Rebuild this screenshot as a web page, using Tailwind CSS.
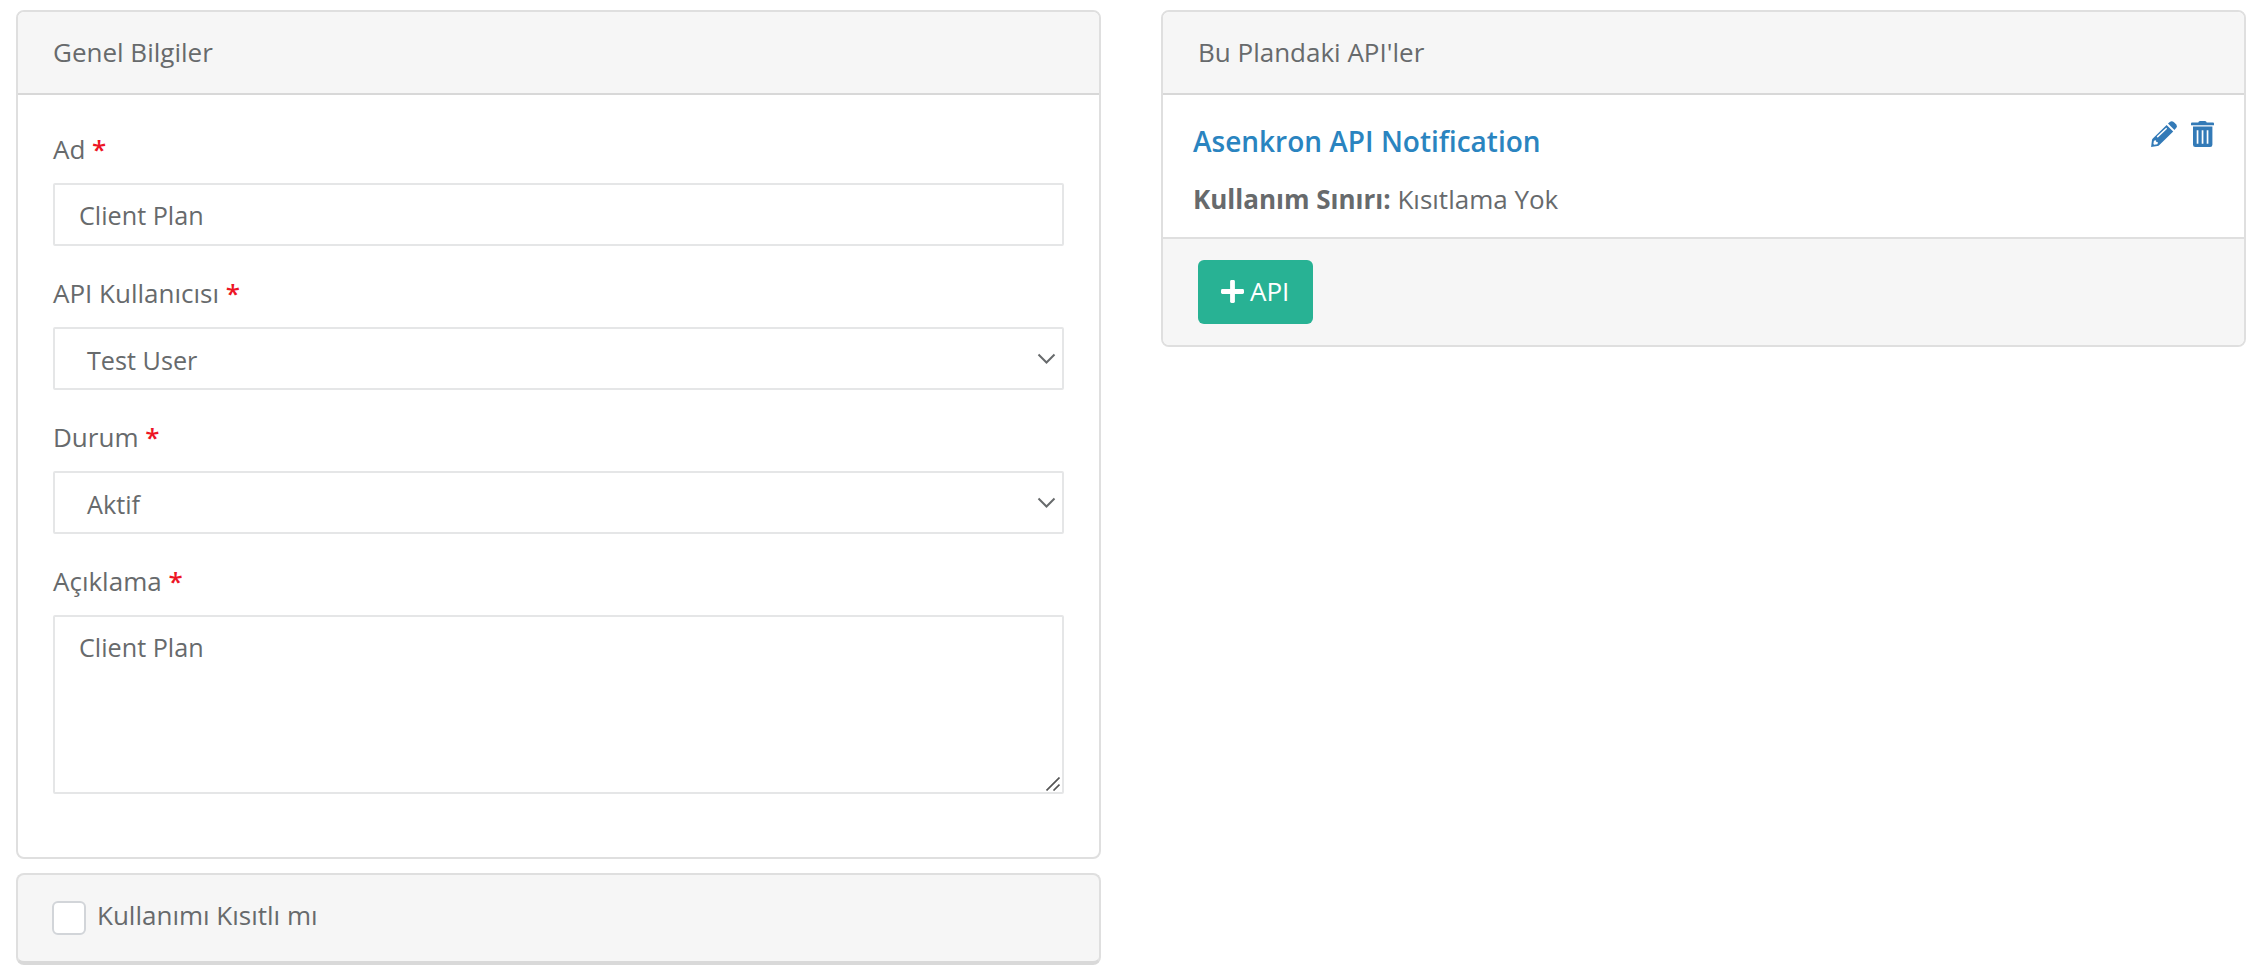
<!DOCTYPE html>
<html lang="tr">
<head>
<meta charset="utf-8">
<title>Plan</title>
<script src="https://cdn.jsdelivr.net/npm/@tailwindcss/browser@4"></script>
</head>
<body class="bg-white font-['Open_Sans',sans-serif] text-[26px] leading-9 text-[#676a6c]">
<main class="flex items-start gap-[60px] pt-2.5 pl-4">
  <div class="flex w-[1085px] flex-col gap-3.5">
    <section class="h-[849px] overflow-hidden rounded-lg border-2 border-[#dfdfdf] bg-white">
      <header class="h-[83px] border-b-2 border-[#d8d8d8] bg-[#f6f6f6] px-[35px] pt-[22px]">Genel Bilgiler</header>
      <form class="flex flex-col px-[35px] pt-9">
        <div class="h-36">
          <label class="block">Ad <b class="font-semibold text-[#ed1525]">*</b></label>
          <div class="mt-4 h-[63px] rounded-xs border-2 border-[#e5e6e7] px-6 pt-3 text-[25.2px]">Client Plan</div>
        </div>
        <div class="h-36">
          <label class="block">API Kullanıcısı <b class="font-semibold text-[#ed1525]">*</b></label>
          <div class="mt-4 flex h-[63px] justify-between rounded-xs border-2 border-[#e5e6e7] pt-[13px] pr-1.5 pl-8 text-[25.2px]">
            <span>Test User</span>
            <svg class="mt-[11px] h-3 w-[19px]" viewBox="0 0 19 12" fill="none" stroke="#676a6c" stroke-width="2"><path d="M1.5 1.5 9.5 9.5 17.5 1.5"/></svg>
          </div>
        </div>
        <div class="h-36">
          <label class="block">Durum <b class="font-semibold text-[#ed1525]">*</b></label>
          <div class="mt-4 flex h-[63px] justify-between rounded-xs border-2 border-[#e5e6e7] pt-[13px] pr-1.5 pl-8 text-[25.2px]">
            <span>Aktif</span>
            <svg class="mt-[11px] h-3 w-[19px]" viewBox="0 0 19 12" fill="none" stroke="#676a6c" stroke-width="2"><path d="M1.5 1.5 9.5 9.5 17.5 1.5"/></svg>
          </div>
        </div>
        <div>
          <label class="block">Açıklama <b class="font-semibold text-[#ed1525]">*</b></label>
          <div class="mt-4 flex h-[179px] justify-between rounded-xs border-2 border-[#e5e6e7] pt-3 pr-0.5 pl-6 text-[25.2px]">
            <span>Client Plan</span>
            <svg class="mb-px h-3.5 w-3.5 self-end" viewBox="0 0 14 14" fill="none" stroke="#555" stroke-width="1.7"><path d="M.5 13.5 13.5.5M7.5 13.5 13.5 7.5"/></svg>
          </div>
        </div>
      </form>
    </section>
    <section class="flex h-[92px] gap-[11px] rounded-lg border-2 border-b-4 border-[#dfdfdf] border-b-[#d9d9d9] bg-[#f6f6f6] pt-[22px] pl-[34px]">
      <span class="mt-1 h-[34px] w-[34px] rounded-md border-2 border-[#d2d5d9] bg-white"></span>
      <span>Kullanımı Kısıtlı mı</span>
    </section>
  </div>
  <section class="h-[337px] w-[1085px] overflow-hidden rounded-lg border-2 border-[#dfdfdf] bg-white">
    <header class="h-[83px] border-b-2 border-[#d8d8d8] bg-[#f6f6f6] px-[35px] pt-[22px]">Bu Plandaki API'ler</header>
    <div class="flex h-[142px] justify-between pt-7 pr-[30px] pl-[30px]">
      <div>
        <h4 class="text-[28px] font-semibold text-[#2a84c0]">Asenkron API Notification</h4>
        <p class="mt-[22px]"><b class="font-bold">Kullanım Sınırı:</b> Kısıtlama Yok</p>
      </div>
      <div class="-mt-0.5 flex gap-3.5 text-[#337ab7]">
        <svg class="h-[26px] w-[26px]" viewBox="0 0 26 26" fill="currentColor">
          <path fill-rule="evenodd" d="M15.6 3.9 22.2 10.4 8.4 24.1Q7.6 24.9 6.5 25.1L.1 25.9.9 19.4Q1 18.2 1.8 17.5ZM14.9 6.9 5.9 15.3Q5.5 16.6 6.9 16.4L15.9 8Q16.1 6.6 14.9 6.9ZM2.9 19.8 2.4 23 3.2 23.8 6.4 23.2 7 21.2 5.3 21 5 19.2Z"/>
          <path d="M17 2.6 18.8.9Q20.7-.6 22.7 1L25 3.3Q26.6 5.2 25.1 7.1L23.4 8.9Z"/>
        </svg>
        <svg class="h-[26px] w-[23px]" viewBox="0 0 23 26" fill="currentColor">
          <path d="M7.3 1.6Q7.5 0 9 0H14Q15.5 0 15.7 1.6H22Q23 1.6 23 2.6V4.2H0V2.6Q0 1.6 1 1.6Z"/>
          <path fill-rule="evenodd" d="M2 5.6H21.4V23.7Q21.4 26 19.1 26H4.3Q2 26 2 23.7ZM5.7 9.3V22.8H7.4V9.3ZM10.7 9.3V22.8H12.4V9.3ZM15.7 9.3V22.8H17.4V9.3Z"/>
        </svg>
      </div>
    </div>
    <footer class="h-[108px] border-t-2 border-[#dfdfdf] bg-[#f6f6f6] pt-[21px] pl-[35px]">
      <button class="flex h-16 w-[115px] rounded-md bg-[#28b294] pt-[13px] pl-[23px] text-white">
        <svg class="mt-[7px] mr-1.5 h-[23px] w-[23px] shrink-0" viewBox="0 0 23 23" fill="currentColor"><rect x="9.1" width="4.8" height="23" rx="1.4"/><rect y="9.1" width="23" height="4.8" rx="1.4"/></svg>
        <span>API</span>
      </button>
    </footer>
  </section>
</main>
</body>
</html>
